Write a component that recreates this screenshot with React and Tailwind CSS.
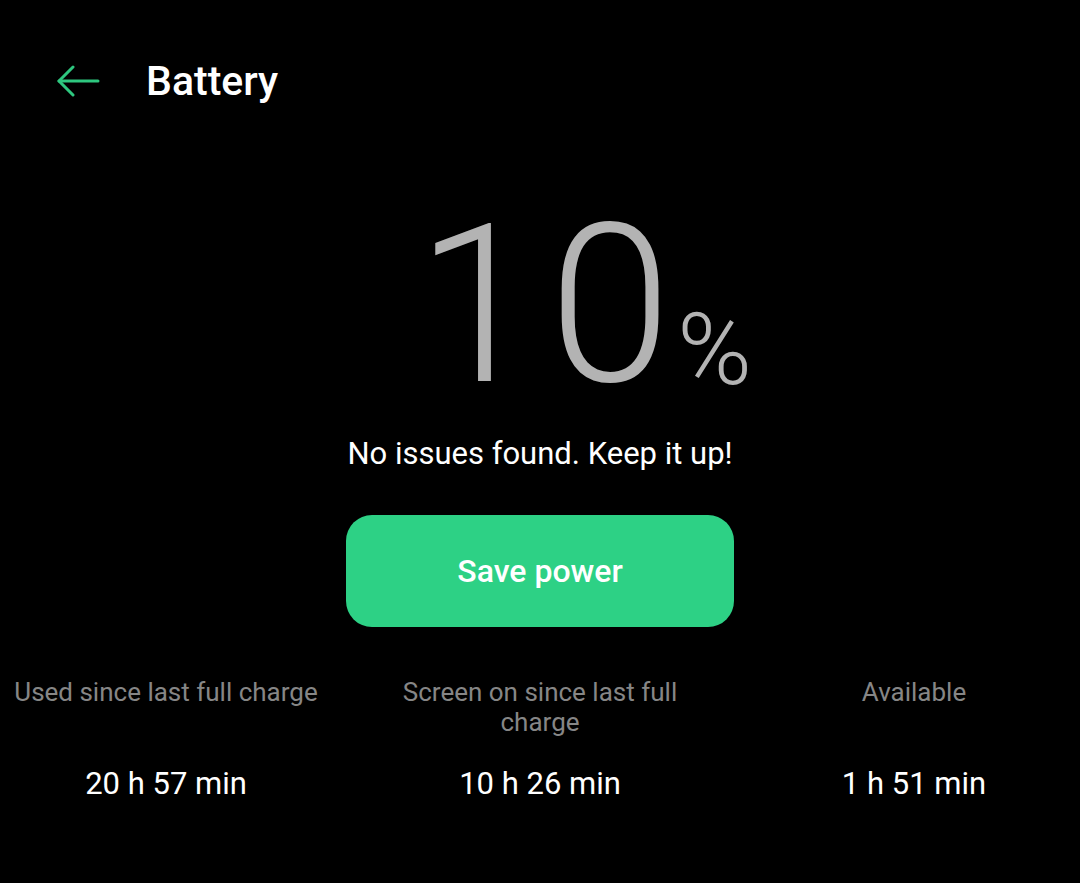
export default function App() {
  return (
    <div className="w-[1080px] h-[883px] bg-black text-white overflow-hidden" style={{ fontFamily: "Roboto, 'Noto Sans', sans-serif" }}>
      <div className="flex items-center h-[160px] pt-[2px]">
        <svg className="ml-[56px]" width="44" height="32" viewBox="0 0 44 32" fill="none" stroke="#2ec77f" strokeWidth="3" strokeLinecap="round" strokeLinejoin="round">
          <path d="M3 16 H42" />
          <path d="M17 2 L3 16 L17 30" />
        </svg>
        <div className="ml-[46px] text-[41px] font-medium leading-none">Battery</div>
      </div>
      <div className="flex justify-center items-end h-[256px] pl-[88px]">
        <span className="text-[221px] font-light leading-none text-[#b3b3b3] tracking-[10px]">10</span>
        <span className="text-[101px] font-light leading-none text-[#b3b3b3] ml-[-4px] mb-[16px]">%</span>
      </div>
      <div className="text-center text-[31px] leading-none mt-[22px]">No issues found. Keep it up!</div>
      <div className="flex justify-center mt-[46px]">
        <div className="w-[388px] h-[112px] rounded-[26px] bg-[#2dd185] flex items-center justify-center text-[32px] font-medium">Save power</div>
      </div>
      <div className="grid grid-cols-[332px_332px_332px] gap-x-[42px] mt-[50px]">
        {[
          ["Used since last full charge", "20 h 57 min"],
          ["Screen on since last full charge", "10 h 26 min"],
          ["Available", "1 h 51 min"],
        ].map(([l, v]) => (
          <div key={l} className="flex flex-col items-center text-center">
            <div className="text-[26px] leading-[30px] text-[#868686] h-[60px]">{l}</div>
            <div className="text-[31px] leading-none mt-[31px]">{v}</div>
          </div>
        ))}
      </div>
    </div>
  );
}
